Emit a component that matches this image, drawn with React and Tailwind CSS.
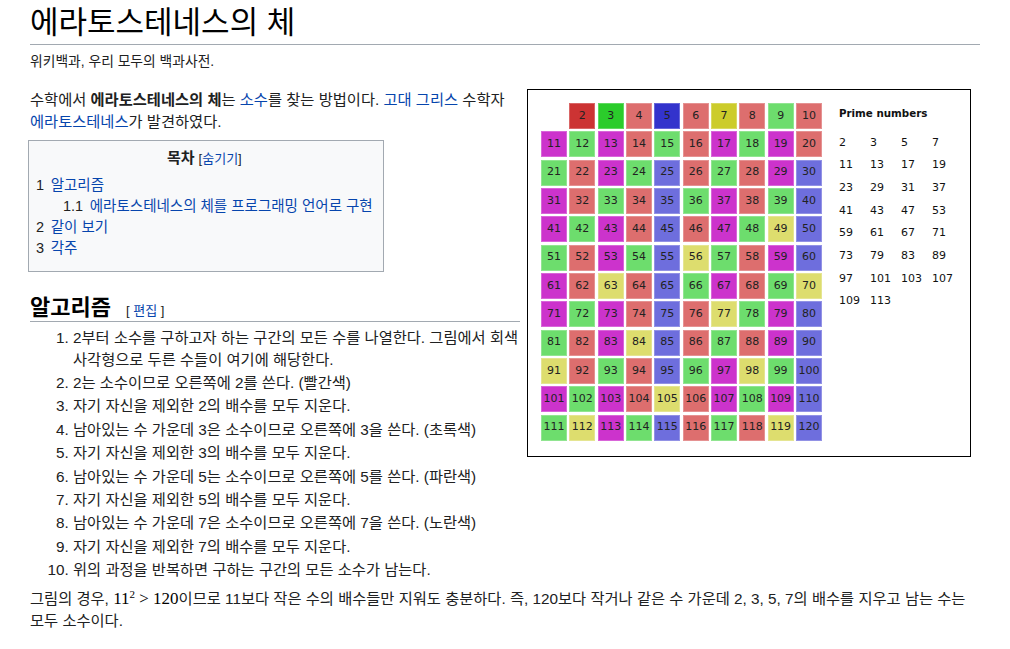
import React from 'react';

const strong = { 2: 'bg-[#cc3333]', 3: 'bg-[#2bcc2b]', 5: 'bg-[#3333cc]', 7: 'bg-[#cccc2b]' };
const light = { 2: 'bg-[#dd6e6e]', 3: 'bg-[#6ddd6d]', 5: 'bg-[#6e6edd]', 7: 'bg-[#dddd6e]' };

// 체로 걸러진 소수(2,3,5,7)의 배수는 p*p 부터 칠해진다
const cellColor = (n) => {
    if (strong[n]) return strong[n];
    let c = null;
    [2, 3, 5, 7].forEach(p => {
        if (n % p === 0 && n >= p * p) c = p;
    });
    return c ? light[c] : 'bg-[#cc33cc]';
};

const primes = [2, 3, 5, 7, 11, 13, 17, 19, 23, 29, 31, 37, 41, 43, 47, 53, 59, 61, 67, 71, 73, 79, 83, 89, 97, 101, 103, 107, 109, 113];

const Sieve = () => {
    const cells = Array.from({ length: 120 }, (_, i) => i + 1);
    return (
        <div className="w-[444px] h-[368px] shrink-0 border border-black bg-white pl-[13px] pt-[13px] flex gap-[17px] font-['DejaVu_Sans',sans-serif]">
            <div className="grid grid-cols-[repeat(10,26px)] auto-rows-[26px] gap-[2.33px] self-start">
                {cells.map(n => n === 1 ? (
                    <div key={n} />
                ) : (
                    <div key={n} className={`${cellColor(n)} border border-white/25 flex items-center justify-center text-[11px] text-[#222]`}>
                        {n}
                    </div>
                ))}
            </div>
            <div className="text-[11px] text-[#111]">
                <div className="leading-[20px] font-bold text-[10.3px]">Prime numbers</div>
                <div className="grid grid-cols-[repeat(4,31px)] auto-rows-[22.7px] items-center mt-[8.5px]">
                    {primes.map(p => <span key={p}>{p}</span>)}
                </div>
            </div>
        </div>
    );
};

const A = ({ children }) => <a href="#" className="text-[#0645ad]">{children}</a>;

const App = () => {
    return (
        <div className="min-h-screen bg-white text-[#202122] px-[30px] break-keep font-['Liberation_Sans','Noto_Sans_CJK_KR',sans-serif]">
            <h1 className="pt-[4px] pb-[2px] leading-[38px] text-[31px] border-b border-[#a2a9b1] text-black">
                에라토스테네스의 체
            </h1>
            <div className="mt-[7px] leading-[20px] text-[13.8px]">위키백과, 우리 모두의 백과사전.</div>

            <div className="mt-[17px] flex items-start gap-[7px]">
                <div className="w-[490px] shrink-0 text-[15.3px]">
                    <p className="leading-[22px]">
                        수학에서 <b>에라토스테네스의 체</b>는 <A>소수</A>를 찾는 방법이다. <A>고대 그리스</A> 수학자 <A>에라토스테네스</A>가 발견하였다.
                    </p>

                    <div className="inline-block -ml-[2px] mt-[7px] border border-[#a2a9b1] bg-[#f8f9fa] pl-[7px] pr-[10px] pt-[7px] pb-[11px] text-[14.5px]">
                        <div className="text-center leading-[20px]">
                            <b className="text-[15px]">목차</b> <span className="text-[13px]">[<A>숨기기</A>]</span>
                        </div>
                        <ul className="mt-[5.5px] leading-[21.3px]">
                            <li><span className="pr-[6.6px]">1</span><A>알고리즘</A></li>
                            <li className="pl-[27px]"><span className="pr-[6.6px]">1.1</span><A>에라토스테네스의 체를 프로그래밍 언어로 구현</A></li>
                            <li><span className="pr-[6.6px]">2</span><A>같이 보기</A></li>
                            <li><span className="pr-[6.6px]">3</span><A>각주</A></li>
                        </ul>
                    </div>

                    <h2 className="mt-[23px] h-[27px] leading-[26px] border-b border-[#a2a9b1] overflow-hidden">
                        <span className="text-[22px] font-bold text-black">알고리즘</span>
                        <span className="ml-[15px] text-[13px]">[ <A>편집</A> ]</span>
                    </h2>

                    <ol className="mt-[5px] pl-[43px] list-decimal leading-[22px]">
                        <li className="mb-[1.4px]">2부터 소수를 구하고자 하는 구간의 모든 수를 나열한다. 그림에서 회색 사각형으로 두른 수들이 여기에 해당한다.</li>
                        <li className="mb-[1.4px]">2는 소수이므로 오른쪽에 2를 쓴다. (빨간색)</li>
                        <li className="mb-[1.4px]">자기 자신을 제외한 2의 배수를 모두 지운다.</li>
                        <li className="mb-[1.4px]">남아있는 수 가운데 3은 소수이므로 오른쪽에 3을 쓴다. (초록색)</li>
                        <li className="mb-[1.4px]">자기 자신을 제외한 3의 배수를 모두 지운다.</li>
                        <li className="mb-[1.4px]">남아있는 수 가운데 5는 소수이므로 오른쪽에 5를 쓴다. (파란색)</li>
                        <li className="mb-[1.4px]">자기 자신을 제외한 5의 배수를 모두 지운다.</li>
                        <li className="mb-[1.4px]">남아있는 수 가운데 7은 소수이므로 오른쪽에 7을 쓴다. (노란색)</li>
                        <li className="mb-[1.4px]">자기 자신을 제외한 7의 배수를 모두 지운다.</li>
                        <li className="mb-[1.4px]">위의 과정을 반복하면 구하는 구간의 모든 소수가 남는다.</li>
                    </ol>
                </div>

                <Sieve />
            </div>

            <p className="mt-[5px] text-[15.3px] leading-[22px]">
                그림의 경우, <span className="font-['Liberation_Serif',serif] text-[17px] text-black">11<sup className="text-[11px] leading-none">2</sup> &gt; 120</span>이므로 11보다 작은 수의 배수들만 지워도 충분하다. 즉, 120보다 작거나 같은 수 가운데 2, 3, 5, 7의 배수를 지우고 남는 수는 모두 소수이다.
            </p>
        </div>
    );
};

export default App;
